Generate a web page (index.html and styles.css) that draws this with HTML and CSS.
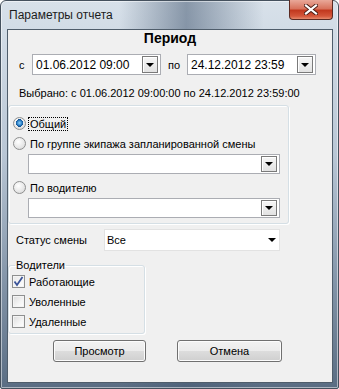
FILE: index.html
```html
<!DOCTYPE html>
<html lang="ru">
<head>
  <meta charset="UTF-8" />
  <title>Параметры отчета</title>
  <link rel="stylesheet" href="styles.css">
</head>
<body>

  <div class="window">
    <div class="titlebar">
      <span class="title">Параметры отчета</span>
      <span class="close">
        <svg width="14" height="11" viewBox="0 0 14 11">
          <path d="M2 1.5 L12 9.5 M12 1.5 L2 9.5" stroke="#4a1c14" stroke-width="4" stroke-linecap="square"/>
          <path d="M2 1.5 L12 9.5 M12 1.5 L2 9.5" stroke="#ffffff" stroke-width="2.2" stroke-linecap="square"/>
        </svg>
      </span>
    </div>

    <div class="client">
      <div class="period-title">Период</div>

      <div class="period-row">
        <span class="lbl-from">с</span>
        <div class="combo date">
          <span class="value">01.06.2012 09:00</span>
          <span class="drop"><span class="arrow"></span></span>
        </div>
        <span class="lbl-to">по</span>
        <div class="combo date">
          <span class="value">24.12.2012 23:59</span>
          <span class="drop"><span class="arrow"></span></span>
        </div>
      </div>

      <div class="selected">Выбрано: с 01.06.2012 09:00:00 по 24.12.2012 23:59:00</div>

      <div class="group mode">
        <div class="option first">
          <span class="radio checked"></span>
          <span class="focus">Общий</span>
        </div>
        <div class="option">
          <span class="radio"></span>
          <span>По группе экипажа запланированной смены</span>
        </div>
        <div class="combo wide">
          <span class="value"></span>
          <span class="drop"><span class="arrow"></span></span>
        </div>
        <div class="option">
          <span class="radio"></span>
          <span>По водителю</span>
        </div>
        <div class="combo wide">
          <span class="value"></span>
          <span class="drop"><span class="arrow"></span></span>
        </div>
      </div>

      <div class="status-row">
        <span class="status-label">Статус смены</span>
        <div class="flat-combo">
          <span class="value">Все</span>
          <span class="arrow"></span>
        </div>
      </div>

      <fieldset class="drivers">
        <legend>Водители</legend>
        <div class="check-row"><span class="check checked"><svg width="11" height="11" viewBox="0 0 11 11"><path d="M1.5 5.5 L4 9 L9.5 1" fill="none" stroke="#3a5398" stroke-width="1.8"/></svg></span>Работающие</div>
        <div class="check-row"><span class="check"></span>Уволенные</div>
        <div class="check-row"><span class="check"></span>Удаленные</div>
      </fieldset>

      <div class="buttons">
        <button class="btn view">Просмотр</button>
        <button class="btn cancel">Отмена</button>
      </div>
    </div>
  </div>

</body>
</html>
```

FILE: styles.css
```css
body {
  margin: 0;
  font-family: "Liberation Sans", Arial, sans-serif;
  font-size: 11px;
  color: #000;
}
.window {
  width: 339px;
  height: 389px;
  box-sizing: border-box;
  border: 1px solid #45515e;
  border-radius: 6px 6px 2px 2px;
  background:
    linear-gradient(to right, rgba(255,255,255,0) 0%, rgba(255,255,255,0) 35%, rgba(70,90,115,0.55) 55%, rgba(255,255,255,0) 78%, rgba(255,255,255,0) 100%),
    linear-gradient(to bottom, #d8e1ea 0%, #b8c6d5 40%, #7f91a5 75%, #5a6d83 100%);
  box-shadow: inset 0 0 0 1px rgba(255,255,255,0.5);
}
.titlebar {
  display: flex;
  align-items: flex-start;
  height: 28px;
}
.title {
  margin: 7px 0 0 8px;
  font-size: 12px;
  color: #1c1c1c;
}
.close {
  margin: -1px 5px 0 auto;
  width: 42px;
  height: 19px;
  display: flex;
  align-items: center;
  justify-content: center;
  border: 1px solid #5b2a22;
  border-top: none;
  border-radius: 0 0 4px 4px;
  background: linear-gradient(to bottom, #e9a899 0%, #d8735d 45%, #c2391f 55%, #d4563a 85%, #e68a6c 100%);
}
.client {
  margin: 0 5px 0 6px;
  height: 352px;
  border: 1px solid #4f5d6b;
  background: #f0f0f0;
}
.period-title {
  text-align: center;
  font-weight: bold;
  font-size: 14px;
  line-height: 16px;
}
.period-row {
  display: flex;
  align-items: center;
  margin-top: 8px;
  padding-left: 11px;
}
.lbl-to {
  margin: 0 0 0 7px;
  width: 19px;
}
.lbl-from {
  width: 13px;
}
.combo {
  display: flex;
  align-items: center;
  box-sizing: border-box;
  background: #fff;
  border: 1px solid #abadb3;
}
.combo .value {
  flex: 1;
  padding-left: 3px;
}
.combo.date {
  width: 129px;
  height: 21px;
  font-size: 12px;
}
.drop {
  width: 16px;
  height: 17px;
  margin-right: 2px;
  box-sizing: border-box;
  border: 1px solid #7a7a7a;
  background: linear-gradient(to bottom, #f6f6f6, #e2e2e2);
  box-shadow: inset 1px 1px 0 #fff;
  display: flex;
  align-items: center;
  justify-content: center;
}
.arrow {
  width: 0;
  height: 0;
  border-left: 4px solid transparent;
  border-right: 4px solid transparent;
  border-top: 4px solid #000;
}
.selected {
  margin: 12px 0 0 11px;
  line-height: 13px;
}
.group {
  box-sizing: border-box;
  border: 1px solid #d5dfe5;
  border-radius: 3px;
  box-shadow: inset 1px 1px 0 #fff, 1px 1px 0 #fff;
}
.mode {
  margin-top: 5px;
  width: 281px;
  height: 119px;
  padding: 11px 0 0 4px;
}
.option {
  display: flex;
  align-items: center;
  height: 13px;
  margin-top: 7px;
}
.option.first {
  margin-top: 0;
}
.radio {
  width: 11px;
  height: 11px;
  margin-right: 4px;
  border-radius: 50%;
  border: 1px solid #8e8f8f;
  background: radial-gradient(circle at 40% 35%, #ffffff 0%, #e6e6e6 60%, #d0d0d0 100%);
}
.radio.checked {
  background:
    radial-gradient(circle at 50% 45%, #8fd3ff 0%, #2a7ec4 30%, #0f4c8c 45%, rgba(0,0,0,0) 47%),
    radial-gradient(circle at 40% 35%, #ffffff 0%, #e6e6e6 60%, #d0d0d0 100%);
}
.focus {
  outline: 1px dotted #000;
  outline-offset: 0;
  padding: 0 1px;
  margin-left: -1px;
}
.combo.wide {
  width: 252px;
  height: 20px;
  margin: 4px 0 0 15px;
}
.combo.wide .drop {
  height: 16px;
}
.status-row {
  display: flex;
  align-items: center;
  margin-top: 5px;
  padding-left: 8px;
}
.status-label {
  width: 88px;
}
.flat-combo {
  display: flex;
  align-items: center;
  width: 176px;
  height: 22px;
  box-sizing: border-box;
  background: #fff;
  border: 1px solid #e2e2e2;
  padding: 0 3px 0 2px;
}
.flat-combo .value {
  flex: 1;
}
.drivers {
  margin: 8px 0 0 0;
  width: 137px;
  height: 75px;
  box-sizing: border-box;
  padding: 3px 0 0 3px;
  border: 1px solid #d5dfe5;
  border-radius: 3px;
  box-shadow: inset 1px 1px 0 #fff, 1px 1px 0 #fff;
}
.drivers legend {
  padding: 0 1px;
  margin-left: 3px;
  line-height: 13px;
}
.check-row {
  display: flex;
  align-items: center;
  height: 13px;
  margin-bottom: 7px;
}
.check {
  width: 11px;
  height: 11px;
  margin-right: 4px;
  border: 1px solid #8e8f8f;
  background: linear-gradient(135deg, #dcdcdc 0%, #f4f4f4 60%, #ffffff 100%);
  box-shadow: inset 0 0 0 1px #f4f4f4;
  display: flex;
  align-items: center;
  justify-content: center;
}
.check.checked {
  background: linear-gradient(135deg, #e8e8e8, #ffffff);
}
.buttons {
  display: flex;
  margin: 6px 0 0 45px;
  gap: 31px;
}
.btn {
  height: 22px;
  font-family: "Liberation Sans", Arial, sans-serif;
  font-size: 11px;
  color: #000;
  border: 1px solid #707070;
  border-radius: 3px;
  background: linear-gradient(to bottom, #f2f2f2 0%, #ebebeb 49%, #dddddd 50%, #cfcfcf 100%);
  box-shadow: inset 0 0 0 1px #fcfcfc;
  padding: 0;
}
.btn.view {
  width: 93px;
}
.btn.cancel {
  width: 105px;
}
```
